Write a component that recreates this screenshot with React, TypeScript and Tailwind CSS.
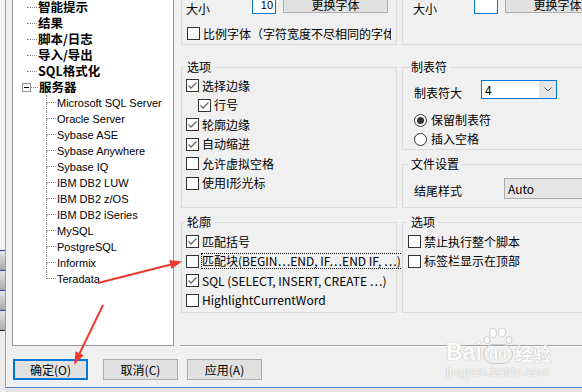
import React from 'react';

const topItems = ['智能提示', '结果', '脚本/日志', '导入/导出', 'SQL格式化'];
const servers = [
  'Microsoft SQL Server',
  'Oracle Server',
  'Sybase ASE',
  'Sybase Anywhere',
  'Sybase IQ',
  'IBM DB2 LUW',
  'IBM DB2 z/OS',
  'IBM DB2 iSeries',
  'MySQL',
  'PostgreSQL',
  'Informix',
  'Teradata',
];

const Check = ({ checked }: { checked?: boolean }) => (
  <span className="w-[13px] h-[13px] shrink-0 border border-[#333] bg-white flex items-center justify-center">
    {checked && (
      <svg width="11" height="11" viewBox="0 0 11 11">
        <polyline points="1.5,5.5 4,8 9.5,2.5" fill="none" stroke="#666" strokeWidth="1.3" />
      </svg>
    )}
  </span>
);

const Radio = ({ checked }: { checked?: boolean }) => (
  <span className="w-[13px] h-[13px] shrink-0 rounded-full border border-[#333] bg-white flex items-center justify-center">
    {checked && <span className="w-[7px] h-[7px] rounded-full bg-[#333]" />}
  </span>
);

const CheckRow = ({
  checked,
  label,
  className = '',
}: {
  checked?: boolean;
  label: React.ReactNode;
  className?: string;
}) => (
  <div className={`h-[19.5px] flex items-center gap-[3px] ${className}`}>
    <Check checked={checked} />
    <span className="whitespace-nowrap leading-[16px]">{label}</span>
  </div>
);

const Tree = () => (
  <div className="ml-[6px] w-[162px] h-[346px] shrink-0 bg-white border-x border-b border-[#999] overflow-hidden">
    <div className="-mt-[1px]">
      {topItems.map((t) => (
        <div key={t} className="h-[16px] flex items-center">
          <span className="ml-[14px] w-[10px] border-t border-dotted border-[#888]" />
          <span className="ml-[1px] font-bold text-[12.5px] leading-[16px]">{t}</span>
        </div>
      ))}
      <div className="h-[16px] flex items-center">
        <span className="ml-[9px] w-[9px] h-[9px] border border-[#919191] bg-white flex items-center justify-center">
          <span className="w-[5px] h-px bg-black" />
        </span>
        <span className="w-[7px] border-t border-dotted border-[#888]" />
        <span className="ml-[1px] font-bold text-[12.5px] leading-[16px]">服务器</span>
      </div>
      {servers.map((s, i) => (
        <div key={s} className="h-[16px] flex items-center">
          <div className="ml-[33px] w-[10px] h-[16px] flex flex-col">
            <span className="h-[8px] border-l border-b border-dotted border-[#888]" />
            {i < servers.length - 1 && <span className="h-[8px] border-l border-dotted border-[#888]" />}
          </div>
          <span className="ml-[1px] font-['Liberation_Sans',sans-serif] text-[11px] leading-[16px]">{s}</span>
        </div>
      ))}
    </div>
  </div>
);

const Arrows = () => (
  <svg className="absolute inset-0 pointer-events-none" width="582" height="392" viewBox="0 0 582 392">
    <line x1="98" y1="283" x2="171" y2="264.5" stroke="#ee3b32" strokeWidth="2" />
    <polygon points="182,261.5 171.5,268.9 169.3,260.1" fill="#ee3b32" />
    <line x1="103" y1="305" x2="79.7" y2="353.3" stroke="#ee3b32" strokeWidth="2" />
    <polygon points="74,365 83.7,355.2 75.6,351.3" fill="#ee3b32" />
  </svg>
);

const Watermark = () => (
  <div className="absolute left-[446px] top-[326px] pointer-events-none text-[#fbfbfb] [text-shadow:0_0_1px_#bdbdbd,0_0_1px_#bdbdbd]">
    <div className="flex items-end h-[38px]">
      <span className="font-['Liberation_Sans',sans-serif] font-bold text-[23px] leading-[24px]">Bai</span>
      <div className="ml-[1px] w-[30px] flex flex-col items-center">
        <svg width="30" height="16" viewBox="0 0 30 16">
          <ellipse cx="10" cy="5" rx="3.5" ry="4.5" fill="#fbfbfb" stroke="#cccccc" />
          <ellipse cx="19" cy="4.5" rx="3.5" ry="4.5" fill="#fbfbfb" stroke="#cccccc" />
          <ellipse cx="4" cy="12" rx="3" ry="3.5" fill="#fbfbfb" stroke="#cccccc" />
          <ellipse cx="26" cy="12" rx="3" ry="3.5" fill="#fbfbfb" stroke="#cccccc" />
        </svg>
        <span className="w-[30px] h-[20px] rounded-[10px] border border-[#cccccc] flex items-center justify-center font-['Liberation_Sans',sans-serif] font-bold text-[15px] leading-[18px]">
          du
        </span>
      </div>
      <span className="ml-[2px] font-bold text-[18px] leading-[22px]">经验</span>
    </div>
    <div className="mt-[1px] font-['Liberation_Sans',sans-serif] text-[12px] leading-[14px] tracking-[0.4px]">
      jingyan.baidu.com
    </div>
  </div>
);

export default function App() {
  return (
    <div className="relative w-[582px] h-[392px] overflow-hidden bg-[#e4e4e4] flex font-['Noto_Sans_CJK_SC','Noto_Sans',sans-serif] text-[12px] text-black">
      {/* window behind */}
      <div className="w-[5px] h-full shrink-0 flex flex-col">
        <div className="h-[250px] bg-[#f4f4f4]" />
        <div className="h-[20px] border-t border-[#2440c8] bg-linear-to-b from-[#e6e6e6] to-[#a9a9a9]" />
        <div className="h-[20px] border-t border-[#2440c8] bg-linear-to-b from-[#e6e6e6] to-[#a9a9a9]" />
        <div className="h-[20px] border-t border-[#2440c8] bg-linear-to-b from-[#e6e6e6] to-[#a9a9a9]" />
        <div className="h-[20px] border-t border-[#2440c8] bg-linear-to-b from-[#e6e6e6] to-[#a9a9a9]" />
        <div className="h-px bg-[#222]" />
        <div className="flex-1 bg-[#ececec]" />
      </div>

      {/* dialog */}
      <div className="flex-1 h-[388px] bg-[#f0f0f0] border-l border-b border-l-[#a0a0a0] border-b-[#4a86c8] flex flex-col">
        <div className="h-[347px] flex items-start">
          <Tree />

          <div className="flex-1 min-w-0 -mt-[10px] h-[357px] flex flex-col">
            <div className="ml-[7px] flex gap-[5px]">
              {/* left column */}
              <div className="w-[216px] shrink-0 flex flex-col">
                <div className="h-[55px] border-x border-b border-[#dcdcdc] pl-[4px] flex flex-col overflow-hidden">
                  <div className="h-[34px] flex items-start">
                    <span className="mt-[11px] leading-[16px]">大小</span>
                    <span className="ml-[42px] mt-[3px] w-[24px] h-[21px] border border-[#0078d7] bg-white text-[11px] leading-[12px] flex items-end justify-end pr-[2px] pb-[2px] font-['Liberation_Sans',sans-serif]">
                      10
                    </span>
                    <span className="ml-[7px] mt-[6px] w-[105px] h-[17px] border border-[#adadad] bg-[#e1e1e1] flex items-center justify-center leading-[16px]">
                      更换字体
                    </span>
                  </div>
                  <div className="h-[19px] ml-[1px] w-[204px] overflow-hidden flex items-center gap-[3px]">
                    <Check />
                    <span className="whitespace-nowrap leading-[16px]">比例字体（字符宽度不尽相同的字体）</span>
                  </div>
                </div>

                <fieldset className="mt-[14px] h-[149px] min-w-0 border border-[#dcdcdc] px-[3px] pt-[1px]">
                  <legend className="pl-[2px] pr-[4px] leading-[16px]">选项</legend>
                  <CheckRow checked label="选择边缘" className="ml-[1px]" />
                  <CheckRow checked label="行号" className="ml-[13px]" />
                  <CheckRow checked label="轮廓边缘" className="ml-[1px]" />
                  <CheckRow checked label="自动缩进" className="ml-[1px]" />
                  <CheckRow label="允许虚拟空格" className="ml-[1px]" />
                  <CheckRow label="使用I形光标" className="ml-[1px]" />
                </fieldset>

                <fieldset className="mt-[6px] h-[99px] min-w-0 border border-[#dcdcdc] px-[3px] pt-[2px]">
                  <legend className="pl-[2px] pr-[4px] leading-[16px]">轮廓</legend>
                  <CheckRow checked label="匹配括号" className="ml-[1px]" />
                  <div className="h-[19.5px] ml-[1px] flex items-center gap-[2px]">
                    <Check />
                    <span className="whitespace-nowrap leading-[14px] border border-dotted border-black pr-[1px]">
                      匹配块(BEGIN…END, IF…END IF, …)
                    </span>
                  </div>
                  <CheckRow checked label="SQL (SELECT, INSERT, CREATE …)" className="ml-[1px]" />
                  <CheckRow label="HighlightCurrentWord" className="ml-[1px]" />
                </fieldset>
              </div>

              {/* right column */}
              <div className="w-[216px] shrink-0 flex flex-col">
                <div className="h-[55px] border-x border-b border-[#dcdcdc] flex items-start">
                  <span className="ml-[10px] mt-[11px] leading-[16px]">大小</span>
                  <span className="ml-[37px] mt-[3px] w-[24px] h-[21px] border border-[#0078d7] bg-white" />
                  <span className="ml-[7px] mt-[6px] w-[105px] h-[17px] shrink-0 border border-[#adadad] bg-[#e1e1e1] flex items-center justify-center leading-[16px]">
                    更换字体
                  </span>
                </div>

                <fieldset className="mt-[14px] h-[91px] min-w-0 border border-[#dcdcdc] px-[5px]">
                  <legend className="pl-[3px] pr-[3px] leading-[16px]">制表符</legend>
                  <div className="mt-[5px] flex items-start">
                    <span className="ml-[6px] mt-[5px] leading-[16px]">制表符大</span>
                    <div className="ml-[19px] w-[76px] h-[19px] border border-[#0078d7] bg-white flex items-center">
                      <span className="flex-1 pl-[3px] leading-[16px] text-[12px]">4</span>
                      <span className="w-[17px] h-full bg-[#e5e5e5] flex items-center justify-center">
                        <svg width="8" height="5" viewBox="0 0 8 5">
                          <polyline points="0.5,0.5 4,4 7.5,0.5" fill="none" stroke="#555" strokeWidth="1" />
                        </svg>
                      </span>
                    </div>
                  </div>
                  <div className="mt-[9.5px] ml-[6px] h-[19px] flex items-center gap-[4px]">
                    <Radio checked />
                    <span className="leading-[16px]">保留制表符</span>
                  </div>
                  <div className="ml-[6px] h-[19px] flex items-center gap-[4px]">
                    <Radio />
                    <span className="leading-[16px]">插入空格</span>
                  </div>
                </fieldset>

                <fieldset className="mt-[6px] h-[52px] min-w-0 border border-[#dcdcdc] px-[5px]">
                  <legend className="pl-[3px] pr-[3px] leading-[16px]">文件设置</legend>
                  <div className="mt-[6px] flex items-start">
                    <span className="ml-[6px] mt-[5px] leading-[16px] whitespace-nowrap">结尾样式</span>
                    <div className="ml-[42px] w-[120px] h-[21px] shrink-0 border border-[#acacac] bg-[#e5e5e5] flex items-center pl-[3px] leading-[16px]">
                      Auto
                    </div>
                  </div>
                </fieldset>

                <fieldset className="mt-[6px] h-[99px] min-w-0 border border-[#dcdcdc] px-[5px] pt-[2px]">
                  <legend className="pl-[3px] pr-[3px] leading-[16px]">选项</legend>
                  <CheckRow label="禁止执行整个脚本" />
                  <CheckRow label="标签栏显示在顶部" />
                </fieldset>
              </div>
            </div>

            <div className="mt-auto ml-[6px] h-[2px] border-t border-[#a0a0a0] bg-white" />
          </div>
        </div>

        <div className="mt-[12px] flex items-start">
          <button className="ml-[7px] w-[75px] h-[21px] border-2 border-[#0078d7] bg-[#e1e1e1] flex items-center justify-center leading-[16px]">
            确定(O)
          </button>
          <button className="ml-[15px] w-[75px] h-[21px] border border-[#adadad] bg-[#e1e1e1] flex items-center justify-center leading-[16px]">
            取消(C)
          </button>
          <button className="ml-[9px] w-[75px] h-[21px] border border-[#adadad] bg-[#e1e1e1] flex items-center justify-center leading-[16px]">
            应用(A)
          </button>
        </div>
      </div>

      <Watermark />
      <Arrows />
    </div>
  );
}
